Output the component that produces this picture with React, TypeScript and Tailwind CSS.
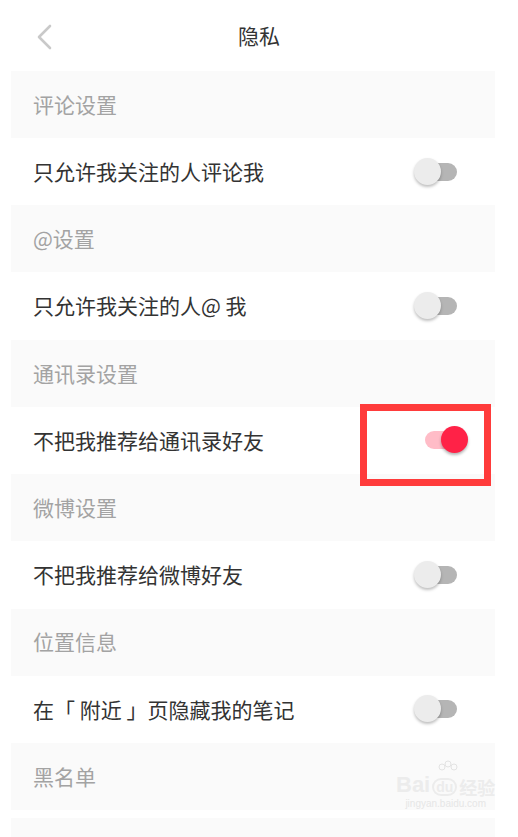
import React from 'react';

type Entry = {
  section: string;
  label?: string;
  on?: boolean;
};

const entries: Entry[] = [
  { section: '评论设置', label: '只允许我关注的人评论我' },
  { section: '@设置', label: '只允许我关注的人@ 我' },
  { section: '通讯录设置', label: '不把我推荐给通讯录好友', on: true },
  { section: '微博设置', label: '不把我推荐给微博好友' },
  { section: '位置信息', label: '在「 附近 」页隐藏我的笔记' },
  { section: '黑名单' },
];

const Toggle = ({ on }: { on?: boolean }) => {
  if (on) {
    return (
      <div className="relative h-[28px] w-[54px] shrink-0">
        <div className="absolute left-[11px] top-[5px] h-[18px] w-[36px] rounded-full bg-[#ffbcc7]" />
        <div className="absolute left-[27px] top-0 h-[27px] w-[27px] rounded-full bg-[#ff2247] shadow-[0_2px_3px_rgba(0,0,0,0.3)]" />
      </div>
    );
  }
  return (
    <div className="relative h-[28px] w-[54px] shrink-0">
      <div className="absolute left-[6px] top-[5px] h-[18px] w-[37px] rounded-full bg-[#b5b5b5]" />
      <div className="absolute left-0 top-0 h-[27px] w-[27px] rounded-full bg-[#ececec] shadow-[0_2px_3px_rgba(0,0,0,0.25)]" />
    </div>
  );
};

export default function App() {
  return (
    <div
      className="relative h-[837px] w-[518px] overflow-hidden bg-white"
      style={{ fontFamily: '"Noto Sans CJK SC", "Noto Sans", sans-serif' }}
    >
      {/* top bar */}
      <div className="relative flex h-[71px] items-center justify-center">
        <svg
          className="absolute left-[34px] top-[24px]"
          width="22"
          height="26"
          viewBox="0 0 22 26"
          fill="none"
        >
          <path
            d="M16 2 L5 13 L16 24"
            stroke="#c9c9c9"
            strokeWidth="2.6"
            strokeLinecap="round"
            strokeLinejoin="round"
          />
        </svg>
        <span className="mt-[1px] text-[21px] text-[#333]">隐私</span>
      </div>

      <div className="mx-[11px] w-[484px]">
        {entries.map((e) => (
          <React.Fragment key={e.section}>
            <div className="flex h-[67px] items-center bg-[#fafafa] px-[22px] text-[21px] text-[#a3a3a3]">
              {e.section}
            </div>
            {e.label && (
              <div className="flex h-[67.4px] items-center justify-between bg-white pl-[22px] pr-[27px] text-[21px] text-[#333]">
                <span>{e.label}</span>
                <Toggle on={e.on} />
              </div>
            )}
          </React.Fragment>
        ))}
        <div className="mt-[8px] h-[40px] bg-[#fafafa]" />
      </div>

      {/* highlight box */}
      <div className="absolute left-[360px] top-[404px] h-[82px] w-[131px] border-[7px] border-[#ff3b3b]" />

      {/* watermark */}
      <div className="absolute left-[396px] top-[760px] flex flex-col items-center leading-none text-[#ececec]">
        <svg width="24" height="14" viewBox="0 0 24 14" className="ml-[4px]">
          <circle cx="6" cy="7" r="3" fill="none" stroke="#e3e3e3" strokeWidth="1" />
          <circle cx="12" cy="4" r="3" fill="none" stroke="#e3e3e3" strokeWidth="1" />
          <circle cx="18" cy="7" r="3" fill="none" stroke="#e3e3e3" strokeWidth="1" />
        </svg>
        <div className="flex items-end gap-[2px]">
          <span className="text-[22px] font-bold" style={{ fontFamily: '"Liberation Sans", sans-serif' }}>
            Bai
          </span>
          <span className="rounded-full border-2 border-[#ececec] px-[2px] text-[14px] font-bold" style={{ fontFamily: '"Liberation Sans", sans-serif' }}>
            du
          </span>
          <span className="text-[18px] font-bold">经验</span>
        </div>
        <span className="mt-[3px] text-[10px] text-[#e6e6e6]" style={{ fontFamily: '"Liberation Sans", sans-serif' }}>
          jingyan.baidu.com
        </span>
      </div>
    </div>
  );
}
